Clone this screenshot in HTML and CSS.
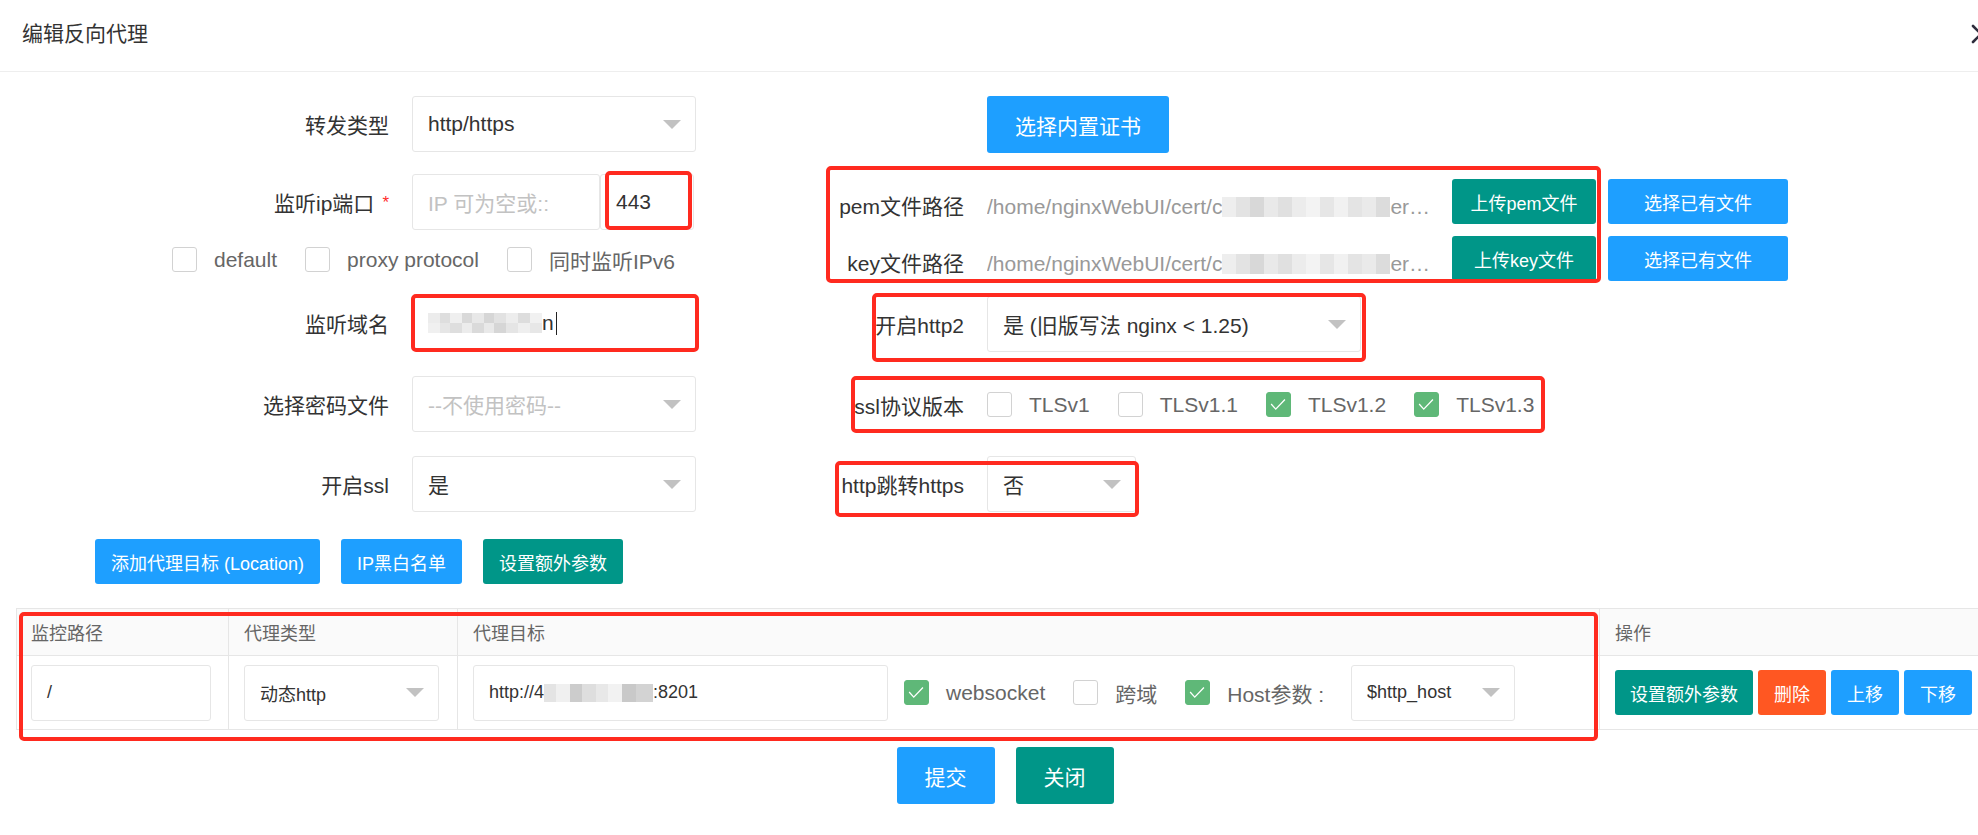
FILE: index.html
```html
<!DOCTYPE html>
<html lang="zh-CN">
<head>
<meta charset="utf-8">
<title>编辑反向代理</title>
<link rel="stylesheet" href="styles.css">
</head>
<body>
<div class="modal">
  <div class="header">
    <span class="title">编辑反向代理</span>
    <span class="close"><svg width="20" height="20" viewBox="0 0 20 20"><path d="M2 2 L18 18 M18 2 L2 18" stroke="#2e2d3c" stroke-width="2.6" stroke-linecap="round" fill="none"/></svg></span>
  </div>
  <div class="content">
    <div class="form">
      <div class="col-left">
        <div class="item">
          <label class="lbl">转发类型</label>
          <div class="field select w284"><span>http/https</span><i class="caret"></i></div>
        </div>
        <div class="item mt22">
          <label class="lbl">监听ip端口<span class="req">*</span></label>
          <div class="field ip ph">IP 可为空或::</div>
          <div class="field port">443</div>
        </div>
        <div class="cbrow">
          <span class="cbi"><i class="cb"></i>default</span>
          <span class="cbi"><i class="cb"></i>proxy protocol</span>
          <span class="cbi"><i class="cb"></i>同时监听IPv6</span>
        </div>
        <div class="item">
          <label class="lbl">监听域名</label>
          <div class="field w284"><span class="blur b-domain"></span><span>n</span><i class="cursor"></i></div>
        </div>
        <div class="item mt25">
          <label class="lbl">选择密码文件</label>
          <div class="field select w284"><span class="ph">--不使用密码--</span><i class="caret"></i></div>
        </div>
        <div class="item mt24">
          <label class="lbl">开启ssl</label>
          <div class="field select w284"><span>是</span><i class="caret"></i></div>
        </div>
        <div class="btnrow">
          <span class="btn btn-sm blue b-add">添加代理目标 (Location)</span>
          <span class="btn btn-sm blue b-ip">IP黑白名单</span>
          <span class="btn btn-sm teal b-extra">设置额外参数</span>
        </div>
      </div>
      <div class="col-right">
        <span class="btn blue cert">选择内置证书</span>
        <div class="frow">
          <label class="lbl">pem文件路径</label>
          <div class="path">/home/nginxWebUI/cert/c<span class="blur b-path"></span>er…</div>
          <span class="btn btn-sm teal up">上传pem文件</span>
          <span class="btn btn-sm blue pick">选择已有文件</span>
        </div>
        <div class="frow">
          <label class="lbl">key文件路径</label>
          <div class="path">/home/nginxWebUI/cert/c<span class="blur b-path"></span>er…</div>
          <span class="btn btn-sm teal up">上传key文件</span>
          <span class="btn btn-sm blue pick">选择已有文件</span>
        </div>
        <div class="item mt4">
          <label class="lbl">开启http2</label>
          <div class="field select w374"><span>是 (旧版写法 nginx &lt; 1.25)</span><i class="caret"></i></div>
        </div>
        <div class="item h57 mt24">
          <label class="lbl">ssl协议版本</label>
          <span class="cbi"><i class="cb"></i>TLSv1</span>
          <span class="cbi"><i class="cb"></i>TLSv1.1</span>
          <span class="cbi"><i class="cb on"><svg viewBox="0 0 25 25"><polyline points="4.5,12 9.5,17.5 19.5,7"/></svg></i>TLSv1.2</span>
          <span class="cbi"><i class="cb on"><svg viewBox="0 0 25 25"><polyline points="4.5,12 9.5,17.5 19.5,7"/></svg></i>TLSv1.3</span>
        </div>
        <div class="item mt23">
          <label class="lbl">http跳转https</label>
          <div class="field select w149"><span>否</span><i class="caret"></i></div>
        </div>
      </div>
    </div>

    <div class="table">
      <div class="trow thead">
        <div class="cell">监控路径</div>
        <div class="cell">代理类型</div>
        <div class="cell">代理目标</div>
        <div class="cell">操作</div>
      </div>
      <div class="trow tbody">
        <div class="cell"><div class="field sm w180">/</div></div>
        <div class="cell"><div class="field sm select w195"><span>动态http</span><i class="caret"></i></div></div>
        <div class="cell">
          <div class="field sm w415">http://4<span class="blur b-url"></span>:8201</div>
          <span class="cbi"><i class="cb on"><svg viewBox="0 0 25 25"><polyline points="4.5,12 9.5,17.5 19.5,7"/></svg></i>websocket</span>
          <span class="cbi"><i class="cb"></i>跨域</span>
          <span class="cbi host"><i class="cb on"><svg viewBox="0 0 25 25"><polyline points="4.5,12 9.5,17.5 19.5,7"/></svg></i>Host参数 :</span>
          <div class="field sm select w164"><span>$http_host</span><i class="caret"></i></div>
        </div>
        <div class="cell ops">
          <span class="btn btn-sm teal">设置额外参数</span>
          <span class="btn btn-sm orange op2">删除</span>
          <span class="btn btn-sm blue op2">上移</span>
          <span class="btn btn-sm blue op2">下移</span>
        </div>
      </div>
    </div>

    <div class="footer">
      <span class="btn blue fbtn">提交</span>
      <span class="btn teal fbtn">关闭</span>
    </div>
  </div>

  <div class="mark m-port"></div>
  <div class="mark m-domain"></div>
  <div class="mark m-pem"></div>
  <div class="mark m-http2"></div>
  <div class="mark m-ssl"></div>
  <div class="mark m-redirect"></div>
  <div class="mark m-table"></div>
</div>
</body>
</html>
```

FILE: styles.css
```css
html, body {
  margin: 0;
  padding: 0;
}
body {
  width: 1978px;
  height: 835px;
  overflow: hidden;
  background: #fff;
  font-family: "Liberation Sans", "Noto Sans CJK SC", sans-serif;
  font-size: 21px;
  color: #333;
}
.modal {
  position: relative;
  width: 2010px;
  height: 835px;
}
.header {
  display: flex;
  justify-content: space-between;
  align-items: center;
  height: 72px;
  box-sizing: border-box;
  border-bottom: 1px solid #eee;
  padding: 0 19px 3px 22px;
}
.title {
  font-size: 21px;
  color: #333;
  line-height: 30px;
}
.close {
  display: flex;
  width: 20px;
  height: 20px;
}
.content {
  padding-top: 24px;
}
.form {
  display: flex;
  align-items: flex-start;
}
.col-left {
  width: 720px;
  flex: none;
}
.col-right {
  flex: 1;
}
.item {
  display: flex;
  align-items: center;
  height: 56px;
}
.h57 { height: 57px; }
.mt4 { margin-top: 4px; }
.mt22 { margin-top: 22px; }
.mt23 { margin-top: 23px; }
.mt24 { margin-top: 24px; }
.mt25 { margin-top: 25px; }
.lbl {
  flex: none;
  width: 412px;
  box-sizing: border-box;
  padding-right: 23px;
  text-align: right;
  white-space: nowrap;
  color: #333;
}
.col-right .lbl {
  width: 267px;
}
.req {
  color: #ff2b2b;
  font-size: 17px;
  margin-left: 8px;
  vertical-align: 3px;
}
.field {
  flex: none;
  height: 56px;
  box-sizing: border-box;
  border: 1px solid #e6e6e6;
  border-radius: 3px;
  background: #fff;
  display: flex;
  align-items: center;
  padding: 0 14px 0 15px;
  white-space: nowrap;
  overflow: hidden;
  color: #333;
}
.select {
  justify-content: space-between;
}
.ph { color: #c2c2c2; }
.field.ph { color: #c2c2c2; }
.w284 { width: 284px; }
.w374 { width: 374px; }
.w149 { width: 149px; }
.w180 { width: 180px; }
.w195 { width: 195px; }
.w415 { width: 415px; }
.w164 { width: 164px; }
.ip { width: 188px; }
.port { width: 94px; }
.caret {
  width: 0;
  height: 0;
  border-left: 9px solid transparent;
  border-right: 9px solid transparent;
  border-top: 9px solid #c2c2c2;
  flex: none;
}
.cursor {
  display: inline-block;
  width: 1px;
  height: 23px;
  background: #222;
  margin-left: 2px;
}
.blur {
  display: inline-block;
  height: 20px;
  flex: none;
}
.b-domain {
  width: 114px;
  background:
    linear-gradient(90deg, #ececec 0 12px, #dedede 12px 22px, #efefef 22px 34px, #d9d9d9 34px 44px, #e8e8e8 44px 56px, #d6d6d6 56px 66px, #e2e2e2 66px 78px, #ededed 78px 90px, #dddddd 90px 102px, #f1f1f1 102px 114px) top / 100% 10px no-repeat,
    linear-gradient(90deg, #f0f0f0 0 12px, #e6e6e6 12px 22px, #dedede 22px 34px, #ececec 34px 44px, #dadada 44px 56px, #e9e9e9 56px 66px, #d6d6d6 66px 78px, #e5e5e5 78px 90px, #efefef 90px 102px, #e7e7e7 102px 114px) bottom / 100% 10px no-repeat;
}
.b-path {
  width: 168px;
  vertical-align: -3px;
  background:
    linear-gradient(90deg, #eeeeee 0 14px, #e3e3e3 14px 28px, #d8d8d8 28px 42px, #e9e9e9 42px 56px, #e0e0e0 56px 70px, #ececec 70px 84px, #f3f3f3 84px 98px, #e6e6e6 98px 112px, #f1f1f1 112px 126px, #e4e4e4 126px 140px, #eaeaea 140px 154px, #dcdcdc 154px 168px);
}
.b-url {
  width: 109px;
  height: 18px;
  background: linear-gradient(90deg, #e4e4e4 0 12px, #f0f0f0 12px 26px, #cccccc 26px 38px, #dedede 38px 52px, #e8e8e8 52px 64px, #f2f2f2 64px 78px, #c9c9c9 78px 92px, #d3d3d3 92px 109px);
}
.cbrow {
  display: flex;
  align-items: center;
  height: 25px;
  padding-left: 172px;
  margin: 17px 0 23px;
}
.cbi {
  display: flex;
  align-items: center;
  margin-right: 28px;
  color: #666;
  white-space: nowrap;
  flex: none;
}
.cb {
  flex: none;
  display: flex;
  width: 25px;
  height: 25px;
  box-sizing: border-box;
  border: 1px solid #d2d2d2;
  border-radius: 3px;
  background: #fff;
  margin-right: 17px;
}
.cb.on {
  background: #5fb878;
  border-color: #5fb878;
}
.cb svg {
  width: 23px;
  height: 23px;
}
.cb polyline {
  fill: none;
  stroke: #fff;
  stroke-width: 1.4;
}
.btn {
  display: inline-flex;
  align-items: center;
  justify-content: center;
  box-sizing: border-box;
  color: #fff;
  border-radius: 3px;
  white-space: nowrap;
  flex: none;
}
.btn-sm {
  height: 45px;
  padding: 0 15px;
  font-size: 18px;
}
.blue { background: #1e9fff; }
.teal { background: #009688; }
.orange { background: #ff5722; }
.btnrow {
  display: flex;
  gap: 21px;
  padding-left: 95px;
  margin-top: 27px;
}
.b-add { width: 225px; }
.b-ip { width: 121px; }
.b-extra { width: 140px; }
.cert {
  margin-left: 267px;
  width: 182px;
  height: 57px;
  font-size: 21px;
  margin-bottom: 25px;
}
.frow {
  display: flex;
  align-items: flex-start;
  height: 57px;
}
.frow .lbl {
  line-height: 57px;
}
.path {
  flex: none;
  width: 450px;
  line-height: 57px;
  color: #999;
  white-space: nowrap;
  overflow: hidden;
  margin-right: 15px;
}
.frow .btn-sm {
  margin-top: 1px;
}
.up {
  width: 144px;
  padding: 0;
  margin-right: 12px;
}
.pick {
  width: 180px;
  padding: 0;
}
.table {
  margin: 24px 0 0 16px;
  width: 1977px;
  border: 1px solid #e6e6e6;
  border-bottom: none;
}
.trow {
  display: grid;
  grid-template-columns: 212px 229px 1142px 1fr;
  border-bottom: 1px solid #e6e6e6;
}
.thead {
  height: 46px;
  background: #fafafa;
  color: #666;
  font-size: 18px;
}
.tbody {
  height: 73px;
}
.cell {
  display: flex;
  align-items: center;
  padding: 0 15px;
  border-right: 1px solid #e6e6e6;
  box-sizing: border-box;
  min-width: 0;
}
.thead .cell:first-child,
.tbody .cell:first-child {
  padding-left: 14px;
}
.cell:last-child {
  border-right: none;
}
.field.sm {
  font-size: 18px;
}
.tbody .cell .cbi {
  font-size: 21px;
}
.w415 {
  margin-right: 16px;
}
.host {
  margin-right: 27px;
}
.ops {
  gap: 5px;
}
.op2 {
  width: 68px;
  padding: 0;
}
.footer {
  display: flex;
  justify-content: center;
  gap: 21px;
  margin-top: 17px;
}
.fbtn {
  width: 98px;
  height: 57px;
  font-size: 21px;
}
.mark {
  position: absolute;
  box-sizing: border-box;
  border: 4px solid #ff2a1f;
  border-radius: 5px;
  pointer-events: none;
}
.m-port { left: 605px; top: 171px; width: 87px; height: 59px; }
.m-domain { left: 411px; top: 294px; width: 288px; height: 58px; }
.m-pem { left: 826px; top: 166px; width: 775px; height: 117px; }
.m-http2 { left: 872px; top: 293px; width: 494px; height: 69px; }
.m-ssl { left: 851px; top: 376px; width: 694px; height: 57px; }
.m-redirect { left: 835px; top: 461px; width: 304px; height: 56px; }
.m-table { left: 19px; top: 612px; width: 1579px; height: 129px; }
```
